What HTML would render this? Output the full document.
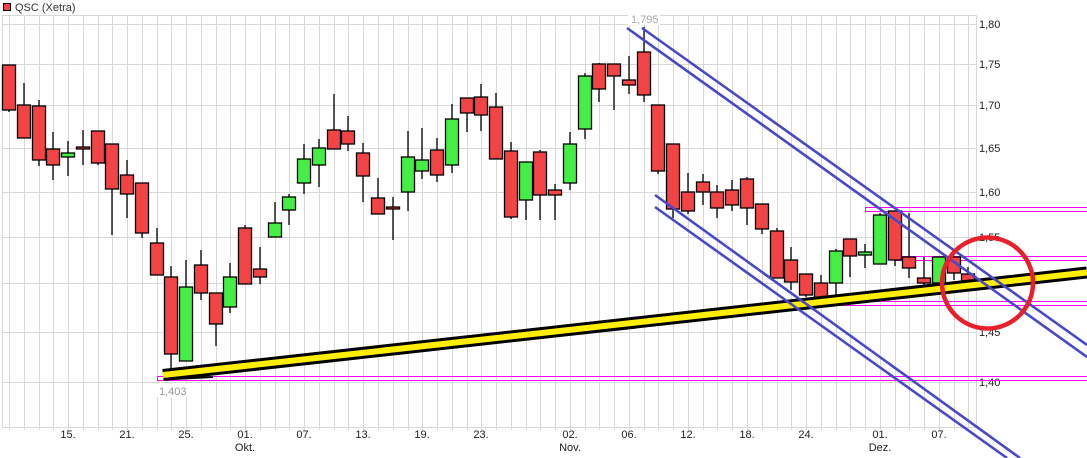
<!DOCTYPE html>
<html><head><meta charset="utf-8"><style>
html,body{margin:0;padding:0;background:#fff;}
svg{display:block;}
text{font-family:"Liberation Sans",sans-serif;}
</style></head><body>
<svg width="1087" height="458" viewBox="0 0 1087 458" xmlns="http://www.w3.org/2000/svg">
<rect width="1087" height="458" fill="#fff"/>
<!-- legend -->
<rect x="3.5" y="3.5" width="7" height="7" fill="#f24444" stroke="#000"/>
<text x="15" y="11" font-size="11" fill="#333">QSC (Xetra)</text>
<!-- grid -->
<g stroke="#d8d8d8" stroke-width="1" shape-rendering="crispEdges">
<line x1="2.5" y1="15.5" x2="976" y2="15.5"/>
<line x1="2.5" y1="24.5" x2="976" y2="24.5"/>
<line x1="2.5" y1="64.5" x2="976" y2="64.5"/>
<line x1="2.5" y1="105.5" x2="976" y2="105.5"/>
<line x1="2.5" y1="148.5" x2="976" y2="148.5"/>
<line x1="2.5" y1="192.5" x2="976" y2="192.5"/>
<line x1="2.5" y1="237.5" x2="976" y2="237.5"/>
<line x1="2.5" y1="283.5" x2="976" y2="283.5"/>
<line x1="2.5" y1="332.5" x2="976" y2="332.5"/>
<line x1="2.5" y1="382.5" x2="976" y2="382.5"/>
<line x1="2.5" y1="427.5" x2="976" y2="427.5"/>
<line x1="2.5" y1="15" x2="2.5" y2="428"/>
<line x1="976.5" y1="15" x2="976.5" y2="428"/>
<line x1="9.5" y1="15" x2="9.5" y2="430"/><line x1="24.5" y1="15" x2="24.5" y2="430"/><line x1="39.5" y1="15" x2="39.5" y2="430"/><line x1="53.5" y1="15" x2="53.5" y2="430"/><line x1="68.5" y1="15" x2="68.5" y2="430"/><line x1="83.5" y1="15" x2="83.5" y2="430"/><line x1="98.5" y1="15" x2="98.5" y2="430"/><line x1="112.5" y1="15" x2="112.5" y2="430"/><line x1="127.5" y1="15" x2="127.5" y2="430"/><line x1="142.5" y1="15" x2="142.5" y2="430"/><line x1="157.5" y1="15" x2="157.5" y2="430"/><line x1="171.5" y1="15" x2="171.5" y2="430"/><line x1="186.5" y1="15" x2="186.5" y2="430"/><line x1="201.5" y1="15" x2="201.5" y2="430"/><line x1="216.5" y1="15" x2="216.5" y2="430"/><line x1="230.5" y1="15" x2="230.5" y2="430"/><line x1="245.5" y1="15" x2="245.5" y2="430"/><line x1="260.5" y1="15" x2="260.5" y2="430"/><line x1="275.5" y1="15" x2="275.5" y2="430"/><line x1="289.5" y1="15" x2="289.5" y2="430"/><line x1="304.5" y1="15" x2="304.5" y2="430"/><line x1="319.5" y1="15" x2="319.5" y2="430"/><line x1="334.5" y1="15" x2="334.5" y2="430"/><line x1="348.5" y1="15" x2="348.5" y2="430"/><line x1="363.5" y1="15" x2="363.5" y2="430"/><line x1="378.5" y1="15" x2="378.5" y2="430"/><line x1="393.5" y1="15" x2="393.5" y2="430"/><line x1="408.5" y1="15" x2="408.5" y2="430"/><line x1="422.5" y1="15" x2="422.5" y2="430"/><line x1="437.5" y1="15" x2="437.5" y2="430"/><line x1="452.5" y1="15" x2="452.5" y2="430"/><line x1="467.5" y1="15" x2="467.5" y2="430"/><line x1="481.5" y1="15" x2="481.5" y2="430"/><line x1="496.5" y1="15" x2="496.5" y2="430"/><line x1="511.5" y1="15" x2="511.5" y2="430"/><line x1="526.5" y1="15" x2="526.5" y2="430"/><line x1="540.5" y1="15" x2="540.5" y2="430"/><line x1="555.5" y1="15" x2="555.5" y2="430"/><line x1="570.5" y1="15" x2="570.5" y2="430"/><line x1="585.5" y1="15" x2="585.5" y2="430"/><line x1="599.5" y1="15" x2="599.5" y2="430"/><line x1="614.5" y1="15" x2="614.5" y2="430"/><line x1="629.5" y1="15" x2="629.5" y2="430"/><line x1="644.5" y1="15" x2="644.5" y2="430"/><line x1="658.5" y1="15" x2="658.5" y2="430"/><line x1="673.5" y1="15" x2="673.5" y2="430"/><line x1="688.5" y1="15" x2="688.5" y2="430"/><line x1="703.5" y1="15" x2="703.5" y2="430"/><line x1="717.5" y1="15" x2="717.5" y2="430"/><line x1="732.5" y1="15" x2="732.5" y2="430"/><line x1="747.5" y1="15" x2="747.5" y2="430"/><line x1="762.5" y1="15" x2="762.5" y2="430"/><line x1="777.5" y1="15" x2="777.5" y2="430"/><line x1="791.5" y1="15" x2="791.5" y2="430"/><line x1="806.5" y1="15" x2="806.5" y2="430"/><line x1="821.5" y1="15" x2="821.5" y2="430"/><line x1="836.5" y1="15" x2="836.5" y2="430"/><line x1="850.5" y1="15" x2="850.5" y2="430"/><line x1="865.5" y1="15" x2="865.5" y2="430"/><line x1="880.5" y1="15" x2="880.5" y2="430"/><line x1="895.5" y1="15" x2="895.5" y2="430"/><line x1="909.5" y1="15" x2="909.5" y2="430"/><line x1="924.5" y1="15" x2="924.5" y2="430"/><line x1="939.5" y1="15" x2="939.5" y2="430"/><line x1="954.5" y1="15" x2="954.5" y2="430"/><line x1="968.5" y1="15" x2="968.5" y2="430"/>
</g>
<!-- axis labels -->
<g font-size="11" fill="#222">
<text x="979" y="28">1,80</text><text x="979" y="68">1,75</text><text x="979" y="109">1,70</text><text x="979" y="152">1,65</text><text x="979" y="196">1,60</text><text x="979" y="241">1,55</text><text x="979" y="287">1,50</text><text x="979" y="336">1,45</text><text x="979" y="386">1,40</text>
</g>
<g font-size="11" fill="#222" text-anchor="middle">
<text x="68" y="438">15.</text><text x="127" y="438">21.</text><text x="186" y="438">25.</text><text x="245" y="438">01.</text><text x="245" y="451">Okt.</text><text x="304" y="438">07.</text><text x="363" y="438">13.</text><text x="422" y="438">19.</text><text x="481" y="438">23.</text><text x="570" y="438">02.</text><text x="570" y="451">Nov.</text><text x="629" y="438">06.</text><text x="688" y="438">12.</text><text x="747" y="438">18.</text><text x="806" y="438">24.</text><text x="880" y="438">01.</text><text x="880" y="451">Dez.</text><text x="939" y="438">07.</text>
</g>
<!-- magenta levels -->
<g fill="none" stroke="#ff00ff" stroke-width="1" shape-rendering="crispEdges">
<rect x="157.5" y="376.5" width="935" height="4"/>
<rect x="865.5" y="207.5" width="230" height="4"/>
<rect x="894.5" y="256.5" width="200" height="4"/>
<rect x="779.5" y="301.5" width="320" height="4"/>
</g>
<!-- candles -->
<g stroke="#000" stroke-width="1.3">
<line x1="9" y1="65" x2="9" y2="112"/><rect x="2.5" y="65" width="13" height="45" fill="#f24444"/>
<line x1="24" y1="83" x2="24" y2="138"/><rect x="17.5" y="105" width="13" height="33" fill="#f24444"/>
<line x1="39" y1="100" x2="39" y2="166"/><rect x="32.5" y="106" width="13" height="54" fill="#f24444"/>
<line x1="53" y1="132" x2="53" y2="180"/><rect x="46.5" y="149" width="13" height="16" fill="#f24444"/>
<line x1="68" y1="141" x2="68" y2="176"/><rect x="61.5" y="153" width="13" height="4" fill="#44ee44"/>
<line x1="83" y1="130" x2="83" y2="165"/><rect x="76.5" y="147" width="13" height="2" fill="#f24444"/>
<line x1="98" y1="131" x2="98" y2="165"/><rect x="91.5" y="131" width="13" height="32" fill="#f24444"/>
<line x1="112" y1="144" x2="112" y2="235"/><rect x="105.5" y="144" width="13" height="45" fill="#f24444"/>
<line x1="127" y1="160" x2="127" y2="218"/><rect x="120.5" y="175" width="13" height="19" fill="#f24444"/>
<line x1="142" y1="183" x2="142" y2="238"/><rect x="135.5" y="183" width="13" height="50" fill="#f24444"/>
<line x1="157" y1="228" x2="157" y2="275"/><rect x="150.5" y="243" width="13" height="32" fill="#f24444"/>
<line x1="171" y1="266" x2="171" y2="378"/><rect x="164.5" y="277" width="13" height="77" fill="#f24444"/>
<line x1="186" y1="260" x2="186" y2="361"/><rect x="179.5" y="287" width="13" height="74" fill="#44ee44"/>
<line x1="201" y1="250" x2="201" y2="300"/><rect x="194.5" y="265" width="13" height="28" fill="#f24444"/>
<line x1="216" y1="293" x2="216" y2="346"/><rect x="209.5" y="293" width="13" height="31" fill="#f24444"/>
<line x1="230" y1="263" x2="230" y2="313"/><rect x="223.5" y="277" width="13" height="30" fill="#44ee44"/>
<line x1="245" y1="225" x2="245" y2="284"/><rect x="238.5" y="228" width="13" height="56" fill="#f24444"/>
<line x1="260" y1="247" x2="260" y2="284"/><rect x="253.5" y="269" width="13" height="8" fill="#f24444"/>
<line x1="275" y1="202" x2="275" y2="237"/><rect x="268.5" y="223" width="13" height="14" fill="#44ee44"/>
<line x1="289" y1="194" x2="289" y2="225"/><rect x="282.5" y="197" width="13" height="13" fill="#44ee44"/>
<line x1="304" y1="144" x2="304" y2="194"/><rect x="297.5" y="159" width="13" height="24" fill="#44ee44"/>
<line x1="319" y1="139" x2="319" y2="187"/><rect x="312.5" y="148" width="13" height="17" fill="#44ee44"/>
<line x1="334" y1="94" x2="334" y2="149"/><rect x="327.5" y="130" width="13" height="19" fill="#f24444"/>
<line x1="348" y1="116" x2="348" y2="151"/><rect x="341.5" y="131" width="13" height="13" fill="#f24444"/>
<line x1="363" y1="143" x2="363" y2="202"/><rect x="356.5" y="153" width="13" height="23" fill="#f24444"/>
<line x1="378" y1="178" x2="378" y2="214"/><rect x="371.5" y="198" width="13" height="16" fill="#f24444"/>
<line x1="393" y1="197" x2="393" y2="240"/><rect x="386.5" y="207" width="13" height="2" fill="#f24444"/>
<line x1="408" y1="131" x2="408" y2="211"/><rect x="401.5" y="157" width="13" height="35" fill="#44ee44"/>
<line x1="422" y1="128" x2="422" y2="179"/><rect x="415.5" y="160" width="13" height="11" fill="#44ee44"/>
<line x1="437" y1="138" x2="437" y2="182"/><rect x="430.5" y="150" width="13" height="25" fill="#f24444"/>
<line x1="452" y1="104" x2="452" y2="173"/><rect x="445.5" y="119" width="13" height="46" fill="#44ee44"/>
<line x1="467" y1="98" x2="467" y2="132"/><rect x="460.5" y="98" width="13" height="15" fill="#f24444"/>
<line x1="481" y1="84" x2="481" y2="131"/><rect x="474.5" y="97" width="13" height="18" fill="#f24444"/>
<line x1="496" y1="93" x2="496" y2="159"/><rect x="489.5" y="107" width="13" height="52" fill="#f24444"/>
<line x1="511" y1="142" x2="511" y2="219"/><rect x="504.5" y="151" width="13" height="66" fill="#f24444"/>
<line x1="526" y1="162" x2="526" y2="220"/><rect x="519.5" y="162" width="13" height="38" fill="#44ee44"/>
<line x1="540" y1="150" x2="540" y2="220"/><rect x="533.5" y="152" width="13" height="43" fill="#f24444"/>
<line x1="555" y1="184" x2="555" y2="220"/><rect x="548.5" y="190" width="13" height="5" fill="#f24444"/>
<line x1="570" y1="132" x2="570" y2="190"/><rect x="563.5" y="144" width="13" height="39" fill="#44ee44"/>
<line x1="585" y1="73" x2="585" y2="139"/><rect x="578.5" y="76" width="13" height="53" fill="#44ee44"/>
<line x1="599" y1="63" x2="599" y2="102"/><rect x="592.5" y="64" width="13" height="25" fill="#f24444"/>
<line x1="614" y1="64" x2="614" y2="110"/><rect x="607.5" y="64" width="13" height="12" fill="#f24444"/>
<line x1="629" y1="56" x2="629" y2="94"/><rect x="622.5" y="80" width="13" height="5" fill="#f24444"/>
<line x1="644" y1="27" x2="644" y2="102"/><rect x="637.5" y="52" width="13" height="43" fill="#f24444"/>
<line x1="658" y1="105" x2="658" y2="174"/><rect x="651.5" y="105" width="13" height="66" fill="#f24444"/>
<line x1="673" y1="144" x2="673" y2="218"/><rect x="666.5" y="144" width="13" height="65" fill="#f24444"/>
<line x1="688" y1="173" x2="688" y2="214"/><rect x="681.5" y="192" width="13" height="19" fill="#f24444"/>
<line x1="703" y1="174" x2="703" y2="205"/><rect x="696.5" y="182" width="13" height="10" fill="#f24444"/>
<line x1="717" y1="185" x2="717" y2="218"/><rect x="710.5" y="192" width="13" height="16" fill="#f24444"/>
<line x1="732" y1="180" x2="732" y2="211"/><rect x="725.5" y="190" width="13" height="15" fill="#f24444"/>
<line x1="747" y1="177" x2="747" y2="225"/><rect x="740.5" y="179" width="13" height="29" fill="#f24444"/>
<line x1="762" y1="204" x2="762" y2="234"/><rect x="755.5" y="204" width="13" height="25" fill="#f24444"/>
<line x1="777" y1="228" x2="777" y2="278"/><rect x="770.5" y="231" width="13" height="47" fill="#f24444"/>
<line x1="791" y1="247" x2="791" y2="290"/><rect x="784.5" y="260" width="13" height="22" fill="#f24444"/>
<line x1="806" y1="274" x2="806" y2="297"/><rect x="799.5" y="274" width="13" height="21" fill="#f24444"/>
<line x1="821" y1="275" x2="821" y2="305"/><rect x="814.5" y="283" width="13" height="17" fill="#f24444"/>
<line x1="836" y1="249" x2="836" y2="305"/><rect x="829.5" y="251" width="13" height="32" fill="#44ee44"/>
<line x1="850" y1="239" x2="850" y2="277"/><rect x="843.5" y="239" width="13" height="17" fill="#f24444"/>
<line x1="865" y1="244" x2="865" y2="268"/><rect x="858.5" y="252" width="13" height="3" fill="#44ee44"/>
<line x1="880" y1="213" x2="880" y2="264"/><rect x="873.5" y="215" width="13" height="49" fill="#44ee44"/>
<line x1="895" y1="211" x2="895" y2="266"/><rect x="888.5" y="211" width="13" height="49" fill="#f24444"/>
<line x1="909" y1="213" x2="909" y2="278"/><rect x="902.5" y="257" width="13" height="11" fill="#f24444"/>
<line x1="924" y1="257" x2="924" y2="290"/><rect x="917.5" y="278" width="13" height="5" fill="#f24444"/>
<line x1="939" y1="257" x2="939" y2="290"/><rect x="932.5" y="257" width="13" height="26" fill="#44ee44"/>
<line x1="954" y1="257" x2="954" y2="280"/><rect x="947.5" y="257" width="13" height="16" fill="#f24444"/>
<line x1="968" y1="267" x2="968" y2="285"/><rect x="961.5" y="274" width="13" height="8" fill="#f24444"/>
</g>
<!-- short black lines -->
<line x1="173" y1="379" x2="213" y2="377" stroke="#000" stroke-width="2"/>
<line x1="833" y1="304" x2="873" y2="300" stroke="#000" stroke-width="2"/>
<!-- yellow band -->
<line x1="163" y1="375" x2="1087" y2="272.5" stroke="#000" stroke-width="12"/>
<line x1="163" y1="375" x2="1087" y2="272.5" stroke="#ffee00" stroke-width="6"/>
<!-- blue channel -->
<g stroke="#4848c8" stroke-width="2.6" fill="none">
<line x1="627" y1="28" x2="1087" y2="357"/>
<line x1="642" y1="28" x2="1087" y2="345"/>
<line x1="655" y1="195" x2="1020" y2="458"/>
<line x1="655" y1="207" x2="1007" y2="458"/>
</g>
<!-- circle -->
<circle cx="987.5" cy="283" r="45.5" fill="none" stroke="#e8202a" stroke-width="4.5"/>
<!-- price labels -->
<rect x="628" y="13" width="32" height="12" fill="#fff"/>
<text x="631" y="23" font-size="11" fill="#aaa">1,795</text>
<rect x="157" y="384" width="30" height="13" fill="#fff"/>
<text x="159" y="395" font-size="11" fill="#999">1,403</text>
</svg>
</body></html>
